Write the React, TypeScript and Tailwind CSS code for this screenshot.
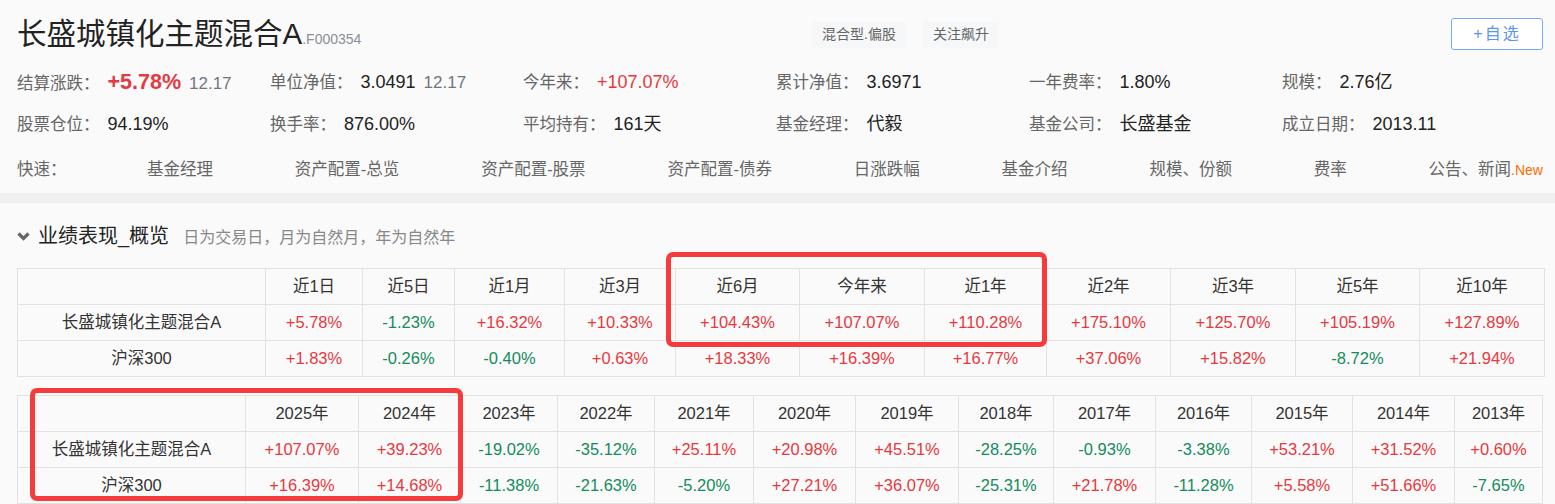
import * as React from "react"

const RED = "text-[#e8383d]"
const GREEN = "text-[#128c5c]"

interface Metric {
  label: string
  value: string
  extra?: string
  tone?: "up" | "plain"
}

const metricRows: Metric[][] = [
  [
    { label: "结算涨跌：", value: "+5.78%", extra: "12.17", tone: "up" },
    { label: "单位净值：", value: "3.0491", extra: "12.17" },
    { label: "今年来：", value: "+107.07%", tone: "up" },
    { label: "累计净值：", value: "3.6971" },
    { label: "一年费率：", value: "1.80%" },
    { label: "规模：", value: "2.76亿" },
  ],
  [
    { label: "股票仓位：", value: "94.19%" },
    { label: "换手率：", value: "876.00%" },
    { label: "平均持有：", value: "161天" },
    { label: "基金经理：", value: "代毅" },
    { label: "基金公司：", value: "长盛基金" },
    { label: "成立日期：", value: "2013.11" },
  ],
]

const quickLinks = [
  "基金经理",
  "资产配置-总览",
  "资产配置-股票",
  "资产配置-债券",
  "日涨跌幅",
  "基金介绍",
  "规模、份额",
  "费率",
]

const periodCols = ["w-[248px]", "w-[97px]", "w-[92px]", "w-[110px]", "w-[111px]", "w-[124px]", "w-[125px]", "w-[122px]", "w-[124px]", "w-[125px]", "w-[124px]", "w-[125px]"]
const periodHead = ["近1日", "近5日", "近1月", "近3月", "近6月", "今年来", "近1年", "近2年", "近3年", "近5年", "近10年"]
const periodFund = ["+5.78%", "-1.23%", "+16.32%", "+10.33%", "+104.43%", "+107.07%", "+110.28%", "+175.10%", "+125.70%", "+105.19%", "+127.89%"]
const periodIndex = ["+1.83%", "-0.26%", "-0.40%", "+0.63%", "+18.33%", "+16.39%", "+16.77%", "+37.06%", "+15.82%", "-8.72%", "+21.94%"]

const yearCols = ["w-[228px]", "w-[113px]", "w-[102px]", "w-[97px]", "w-[97px]", "w-[99px]", "w-[102px]", "w-[103px]", "w-[95px]", "w-[102px]", "w-[96px]", "w-[101px]", "w-[102px]", "w-[88px]"]
const yearHead = ["2025年", "2024年", "2023年", "2022年", "2021年", "2020年", "2019年", "2018年", "2017年", "2016年", "2015年", "2014年", "2013年"]
const yearFund = ["+107.07%", "+39.23%", "-19.02%", "-35.12%", "+25.11%", "+20.98%", "+45.51%", "-28.25%", "-0.93%", "-3.38%", "+53.21%", "+31.52%", "+0.60%"]
const yearIndex = ["+16.39%", "+14.68%", "-11.38%", "-21.63%", "-5.20%", "+27.21%", "+36.07%", "-25.31%", "+21.78%", "-11.28%", "+5.58%", "+51.66%", "-7.65%"]

function Cell({ children, className = "" }: { children: React.ReactNode; className?: string }) {
  return (
    <td className={`h-[36px] border border-[#e2e2e2] p-0 text-center text-[16.5px] ${className}`}>
      {children}
    </td>
  )
}

function ReturnTable({
  cols,
  head,
  rows,
  className = "",
}: {
  cols: string[]
  head: string[]
  rows: { name: string; values: string[] }[]
  className?: string
}) {
  return (
    <table className={`table-fixed border-collapse ${className}`}>
      <colgroup>
        {cols.map((c, i) => (
          <col key={i} className={c} />
        ))}
      </colgroup>
      <tbody>
        <tr>
          <Cell>{""}</Cell>
          {head.map((h) => (
            <Cell key={h} className="text-[#333]">{h}</Cell>
          ))}
        </tr>
        {rows.map((r) => (
          <tr key={r.name}>
            <Cell className="text-[#333]">{r.name}</Cell>
            {r.values.map((v, i) => (
              <Cell key={i} className={v.startsWith("-") ? GREEN : RED}>
                {v}
              </Cell>
            ))}
          </tr>
        ))}
      </tbody>
    </table>
  )
}

export default function App() {
  return (
    <div className="relative h-[504px] w-full overflow-hidden bg-[#fafafa] font-['Liberation_Sans','Noto_Sans_CJK_SC',sans-serif] text-[#333]">
      {/* Header */}
      <div className="pl-[17px] pr-[12px] pt-[18px]">
        <div className="flex h-[32px] items-center">
          <div className="flex w-[795px] items-baseline">
            <h1 className="text-[29.5px] leading-[32px] text-[#222]">长盛城镇化主题混合A</h1>
            <span className="text-[14px] text-[#8a8f98]">.F000354</span>
          </div>
          <span className="rounded-[2px] bg-[#f6f7f9] px-[10px] py-[3px] text-[14px] text-[#666]">混合型.偏股</span>
          <span className="ml-[17px] rounded-[2px] bg-[#f6f7f9] px-[10px] py-[3px] text-[14px] text-[#666]">关注飙升</span>
          <button className="ml-auto flex h-[32px] w-[92px] items-center justify-center rounded-[3px] border border-[#7aa9f5] bg-white text-[16px] tracking-[2px] text-[#5a95f0]">
            +自选
          </button>
        </div>

        <div className="mt-[11px]">
          {metricRows.map((row, ri) => (
            <div key={ri} className="grid h-[42px] w-[1518px] grid-cols-6 items-center">
              {row.map((m) => (
                <div key={m.label} className="flex items-baseline gap-2">
                  <span className="text-[16.5px] text-[#666]">{m.label}</span>
                  <span
                    className={
                      m.tone === "up"
                        ? m.extra
                          ? "text-[21.5px] font-bold text-[#e33b45]"
                          : "text-[18px] text-[#e8383d]"
                        : "text-[18px] text-[#222]"
                    }
                  >
                    {m.value}
                  </span>
                  {m.extra && <span className="text-[17px] text-[#6f7682]">{m.extra}</span>}
                </div>
              ))}
            </div>
          ))}

          <div className="flex h-[48px] items-center text-[16.5px] text-[#666]">
            <span className="w-[130px]">快速：</span>
            <div className="flex flex-1 items-center justify-between">
              {quickLinks.map((l) => (
                <span key={l}>{l}</span>
              ))}
              <span>
                公告、新闻<span className="text-[14px] text-[#ff6a00]">.New</span>
              </span>
            </div>
          </div>
        </div>
      </div>

      <div className="h-[10px] bg-[#f0f0f0]" />

      {/* Performance */}
      <div className="px-[17px]">
        <div className="flex h-[65px] items-center">
          <svg width="13" height="9" viewBox="0 0 13 9" className="mt-[1px]">
            <polyline points="1.5,1.5 6.5,6.5 11.5,1.5" fill="none" stroke="#666" strokeWidth="3.2" />
          </svg>
          <div className="ml-[8px] flex items-baseline">
            <span className="text-[20px] text-[#222]">业绩表现_概览</span>
            <span className="ml-[14px] text-[16px] text-[#888]">日为交易日，月为自然月，年为自然年</span>
          </div>
        </div>

        <ReturnTable
          cols={periodCols}
          head={periodHead}
          rows={[
            { name: "长盛城镇化主题混合A", values: periodFund },
            { name: "沪深300", values: periodIndex },
          ]}
          className="w-[1527px]"
        />

        <ReturnTable
          cols={yearCols}
          head={yearHead}
          rows={[
            { name: "长盛城镇化主题混合A", values: yearFund },
            { name: "沪深300", values: yearIndex },
          ]}
          className="mt-[18px] w-[1525px]"
        />
      </div>

      {/* highlight marks */}
      <div className="pointer-events-none absolute left-[666px] top-[252px] h-[95px] w-[381px] rounded-[7px] border-[5px] border-[#f53b3b]" />
      <div className="pointer-events-none absolute left-[30px] top-[388px] h-[113px] w-[433px] rounded-[7px] border-[5px] border-[#f53b3b]" />
    </div>
  )
}
